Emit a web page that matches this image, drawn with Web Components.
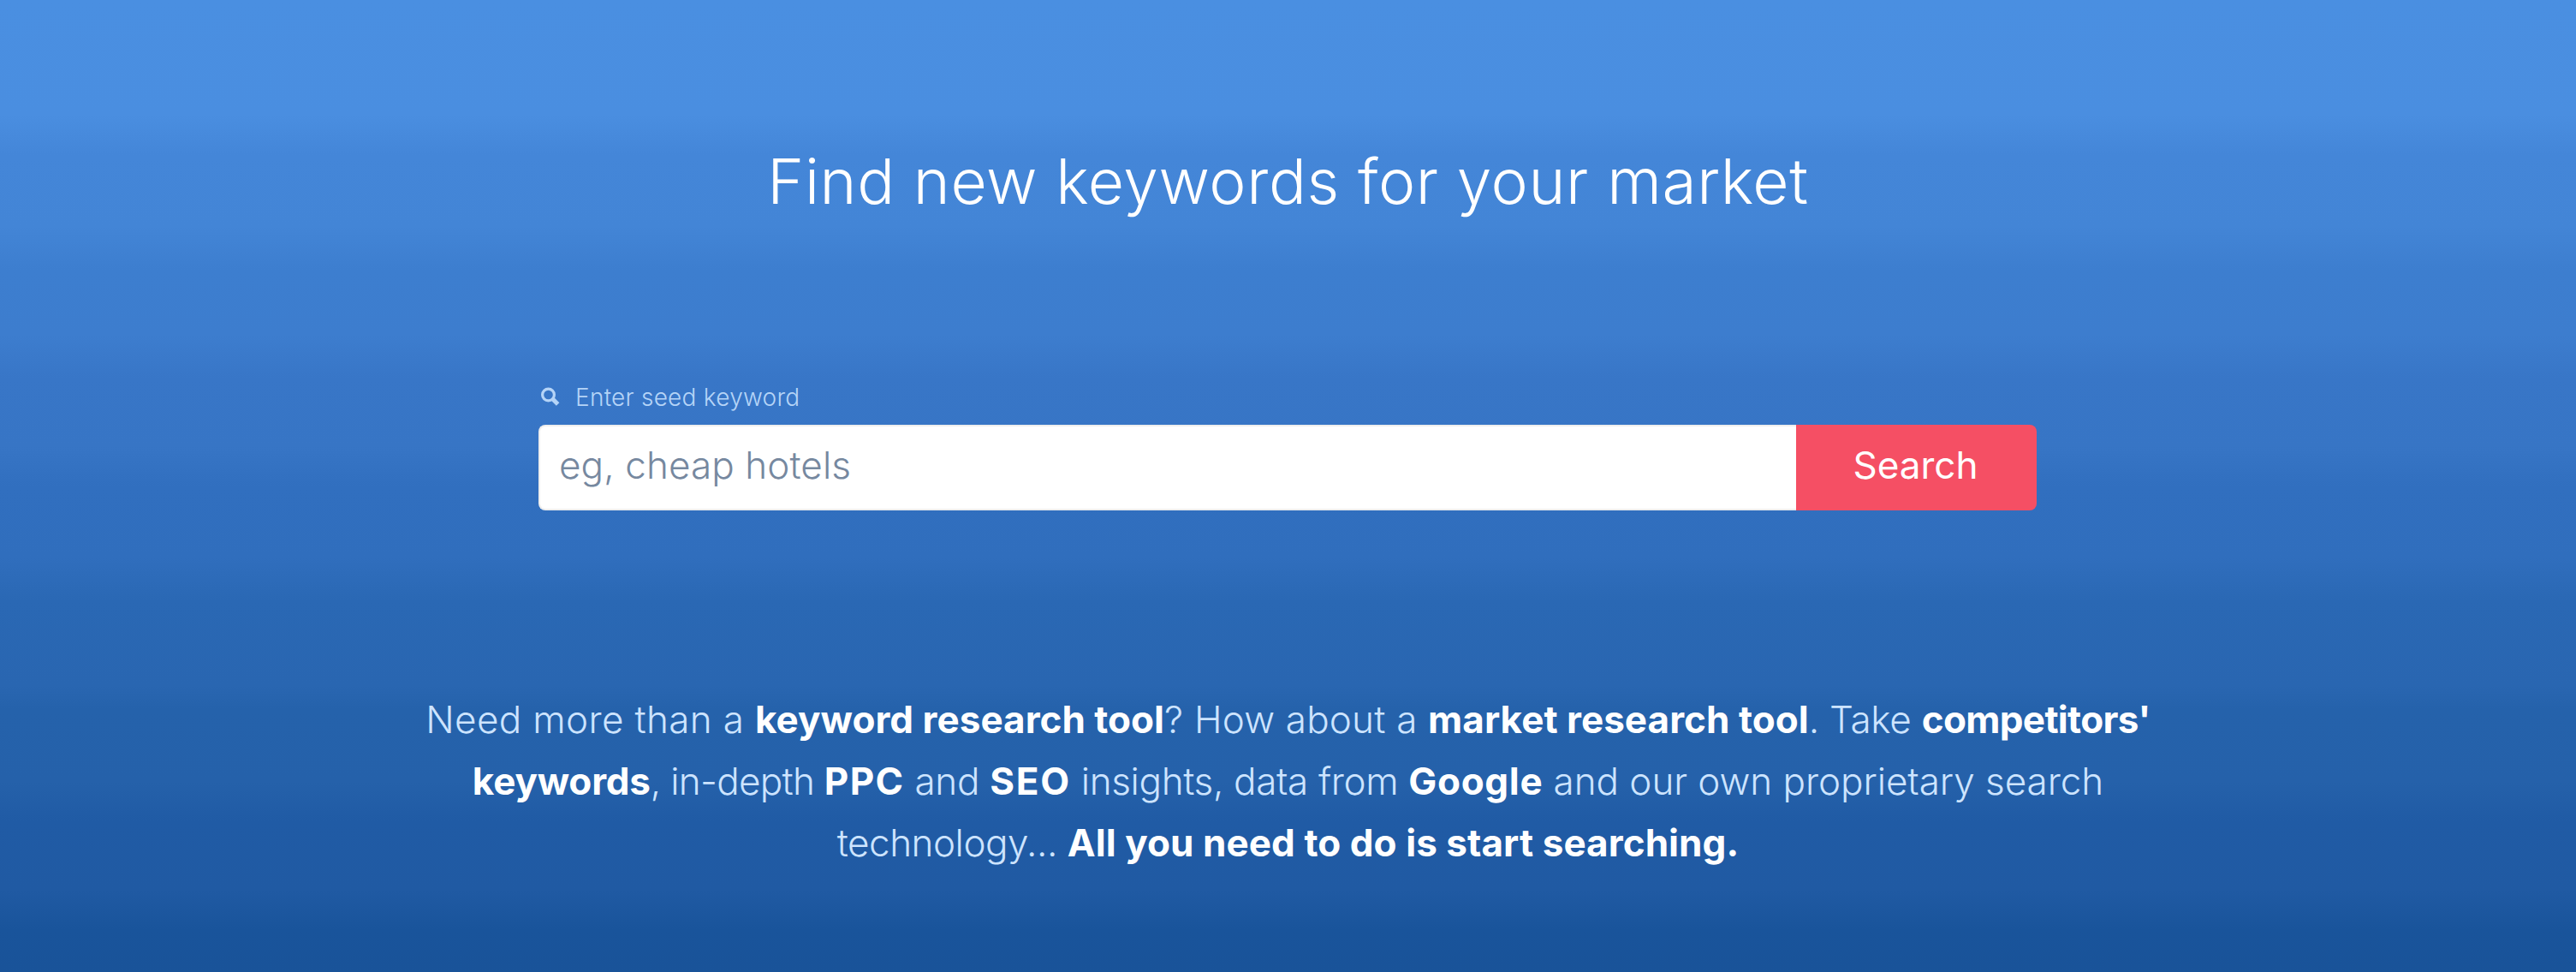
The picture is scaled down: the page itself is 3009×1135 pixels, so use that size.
<!DOCTYPE html>
<html lang="en">
<head>
    <meta charset="utf-8">
    <title>Find new keywords for your market</title>
    <style>
        body {
            margin: 0;
            font-family: Inter, Roboto, sans-serif;
            color: #ffffff;
        }
    </style>
</head>
<body>
    <keyword-hero>
        <hero-title slot="title">Find new keywords for your market</hero-title>
        <keyword-search slot="search" label="Enter seed keyword" placeholder="eg, cheap hotels" button="Search"></keyword-search>
        <hero-pitch slot="pitch"></hero-pitch>
    </keyword-hero>

    <script>
        class KeywordHero extends HTMLElement {
            constructor() {
                super();
                this.attachShadow({ mode: 'open' });
                this.shadowRoot.innerHTML = `
                    <style>
                        :host {
                            display: flex;
                            flex-direction: column;
                            align-items: center;
                            box-sizing: border-box;
                            height: 1135px;
                            padding-top: 167px;
                            overflow: hidden;
                            /* stepped blue, soft edges between the bands */
                            background: linear-gradient(
                                #4a8fe1 0, #4a8ee0 134px,
                                #4486d8 181px, #4385d6 264px,
                                #3d7ecf 315px, #3d7dce 391px,
                                #3876c7 442px, #3775c5 521px,
                                #316fbf 568px, #306ebd 651px,
                                #2a68b4 702px, #2966b1 800px,
                                #2562ab 829px, #2561aa 912px,
                                #205ba5 959px, #205aa3 1039px,
                                #19549b 1086px, #195399 1135px);
                        }

                        .search {
                            margin: 186px 1px 0 0;
                        }

                        .pitch {
                            margin-top: 208px;
                        }
                    </style>
                    <slot name="title"></slot>
                    <div class="search"><slot name="search"></slot></div>
                    <div class="pitch"><slot name="pitch"></slot></div>
                `;
            }
        }

        class HeroTitle extends HTMLElement {
            constructor() {
                super();
                this.attachShadow({ mode: 'open' });
                this.shadowRoot.innerHTML = `
                    <style>
                        :host {
                            display: block;
                        }

                        h1 {
                            margin: 0;
                            font-size: 73px;
                            font-weight: 300;
                            line-height: 90px;
                            letter-spacing: 0.62px;
                            white-space: nowrap;
                        }
                    </style>
                    <h1><slot></slot></h1>
                `;
            }
        }

        class KeywordSearch extends HTMLElement {
            constructor() {
                super();
                this.attachShadow({ mode: 'open' });
                this.shadowRoot.innerHTML = `
                    <style>
                        :host {
                            display: block;
                            width: 1750px;
                        }

                        label {
                            display: flex;
                            align-items: center;
                            gap: 17px;
                            box-sizing: border-box;
                            height: 40px;
                            margin-bottom: 13px;
                            padding: 2px 0 0 2px;
                            font-size: 28px;
                            font-weight: 300;
                            line-height: 38px;
                            letter-spacing: 0.25px;
                            color: #b5d4f7;
                        }

                        svg {
                            display: block;
                            width: 24px;
                            height: 24px;
                        }

                        .row {
                            display: flex;
                            height: 100px;
                        }

                        input, button {
                            box-sizing: border-box;
                            margin: 0;
                            font-family: inherit;
                            font-size: 44px;
                        }

                        input {
                            flex: 1;
                            min-width: 0;
                            padding: 0 22px 6px;
                            border: 2px solid #eeeeee;
                            border-right: none;
                            border-radius: 8px 0 0 8px;
                            background: #ffffff;
                            font-weight: 300;
                            letter-spacing: 0.1px;
                            outline: none;
                        }

                        input::placeholder {
                            color: #76889f;
                            opacity: 1;
                        }

                        button {
                            width: 281px;
                            padding: 0 2px 6px 0;
                            border: none;
                            border-radius: 0 8px 8px 0;
                            background: #f54f64;
                            color: #ffffff;
                            cursor: pointer;
                        }
                    </style>
                    <label for="seed">
                        <svg viewBox="0 0 24 24" fill="none" stroke="currentColor">
                            <circle cx="9.5" cy="9" r="6.9" stroke-width="3.2"/>
                            <path d="M14.2 13.6 L20.6 20" stroke-width="5"/>
                        </svg>
                        <span></span>
                    </label>
                    <div class="row">
                        <input id="seed" type="text">
                        <button type="button"></button>
                    </div>
                `;
            }

            connectedCallback() {
                this.shadowRoot.querySelector('span').textContent = this.getAttribute('label');
                this.shadowRoot.querySelector('input').placeholder = this.getAttribute('placeholder');
                this.shadowRoot.querySelector('button').textContent = this.getAttribute('button');
            }
        }

        // [text, letter spacing in px, bold]
        const pitchLines = [
            [
                ['Need more than a ', 0.35],
                ['keyword research tool', 0.04, true],
                ['? How about a ', 0.2],
                ['market research tool', 0.05, true],
                ['. Take ', -0.27],
                ["competitors'", -0.65, true]
            ],
            [
                ['keywords', -0.19, true],
                [', in-depth ', -0.7],
                ['PPC', 1.3, true],
                [' and ', -0.26],
                ['SEO', 1.67, true],
                [' insights, data from ', -0.35],
                ['Google', 0.68, true],
                [' and our own proprietary search', -0.05]
            ],
            [
                ['technology... ', -0.48],
                ['All you need to do is start searching.', 0.08, true]
            ]
        ];

        class HeroPitch extends HTMLElement {
            constructor() {
                super();
                this.attachShadow({ mode: 'open' });
                this.shadowRoot.innerHTML = `
                    <style>
                        :host {
                            display: block;
                            text-align: center;
                            font-size: 44px;
                            font-weight: 300;
                            line-height: 72px;
                            color: #cde4ff;
                        }

                        p {
                            margin: 0;
                        }

                        .line {
                            display: block;
                            white-space: pre;
                        }

                        b {
                            font-weight: 700;
                            color: #ffffff;
                        }
                    </style>
                    <p></p>
                `;
                const p = this.shadowRoot.querySelector('p');
                for (const parts of pitchLines) {
                    const line = document.createElement('span');
                    line.className = 'line';
                    for (const [text, spacing, bold] of parts) {
                        const el = document.createElement(bold ? 'b' : 'span');
                        el.textContent = text;
                        el.style.letterSpacing = spacing + 'px';
                        line.appendChild(el);
                    }
                    p.appendChild(line);
                }
            }
        }

        customElements.define('keyword-hero', KeywordHero);
        customElements.define('hero-title', HeroTitle);
        customElements.define('keyword-search', KeywordSearch);
        customElements.define('hero-pitch', HeroPitch);
    </script>
</body>
</html>
